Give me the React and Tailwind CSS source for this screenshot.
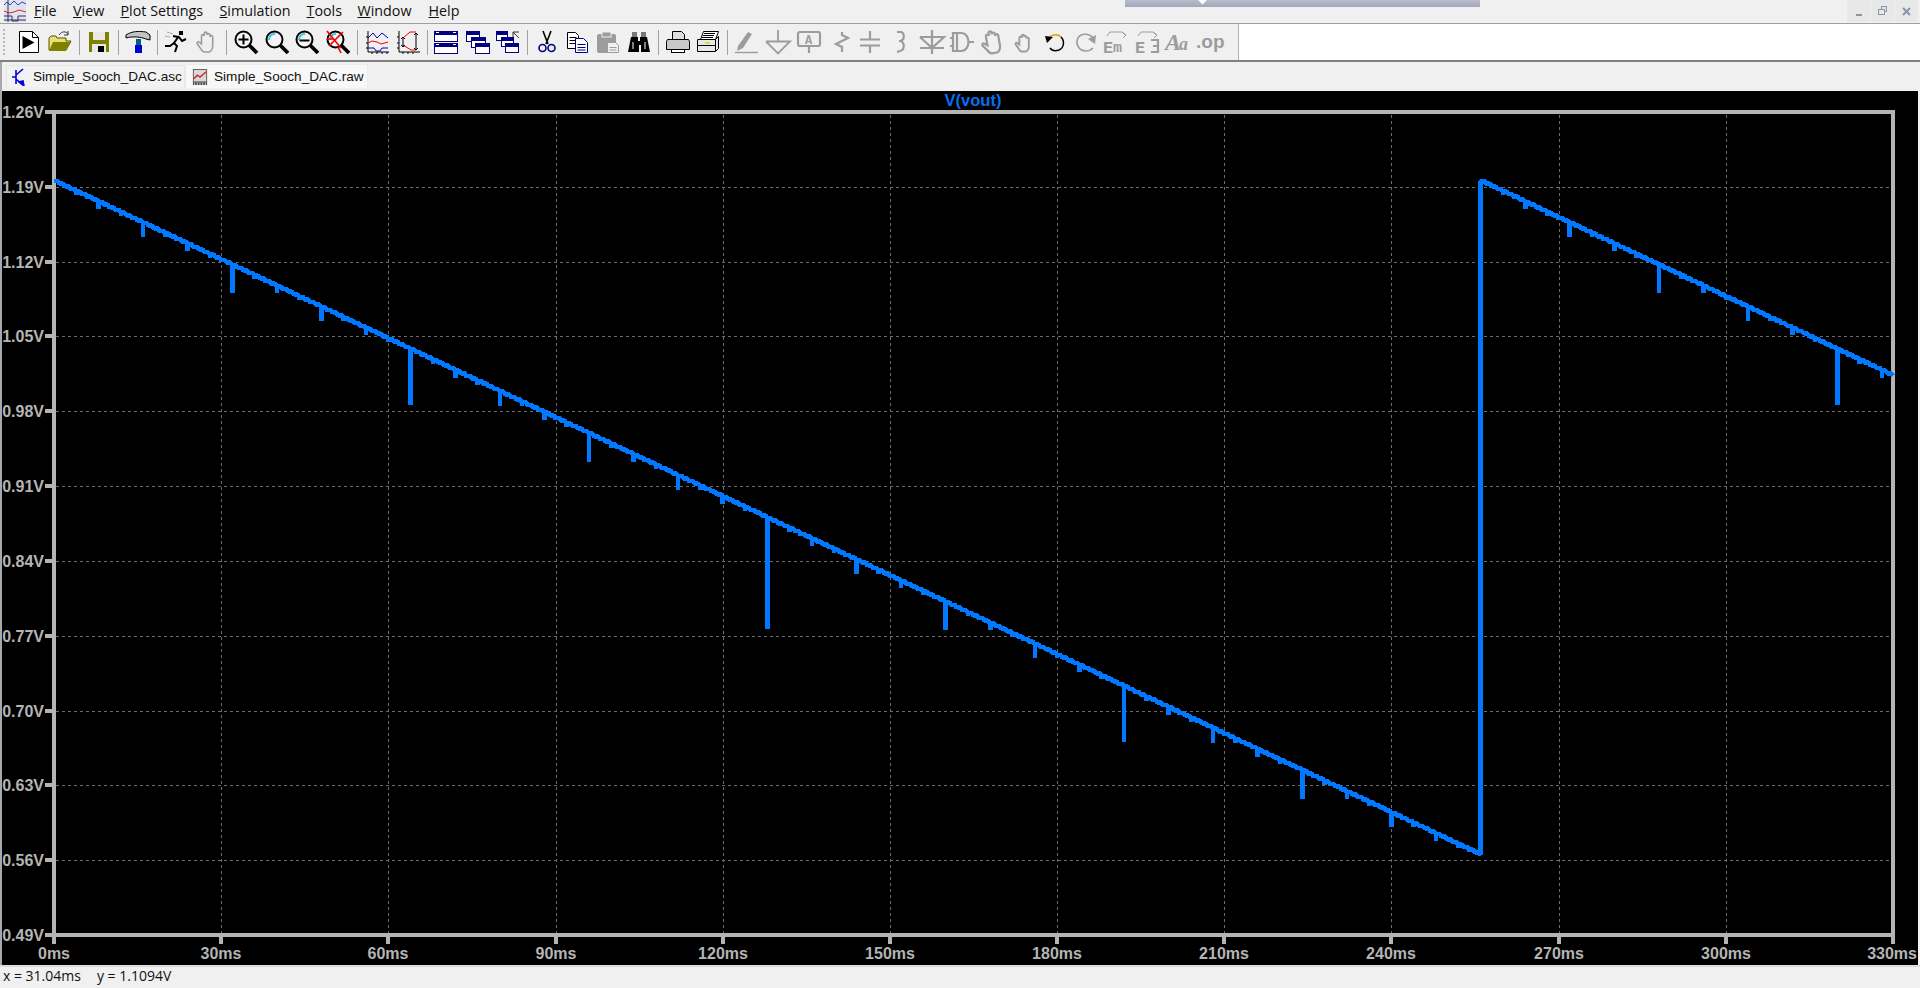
const GRAY = "#9c9c9c";

const menus = [
  ["F", "ile", "w-[39px]"],
  ["V", "iew", "w-[47.5px]"],
  ["P", "lot Settings", "w-[99px]"],
  ["S", "imulation", "w-[87px]"],
  ["T", "ools", "w-[51px]"],
  ["W", "indow", "w-[71px]"],
  ["H", "elp", "w-[40px]"],
];

const Mag = ({ children }) => (
  <>
    <path d="M15 15l8 8" stroke="#000" strokeWidth="3.8" />
    <circle cx="9.5" cy="9.5" r="8" fill="#f4f4f4" stroke="#000" strokeWidth="2" />
    {children}
  </>
);

const Glint = () => <path d="M4 10a5.5 5.5 0 016-6" fill="none" stroke="#35c8e0" strokeWidth="2" />;

const Win = ({ x, y, w, h }) => (
  <>
    <rect x={x + 0.5} y={y + 0.5} width={w} height={h} fill="#fff" stroke="#000080" />
    <rect x={x} y={y} width={w + 1} height="4" fill="#000080" />
  </>
);

const HandPath = ({ s = 1.6 }) => (
  <path
    d="M6.5 14V6a1.4 1.4 0 012.8 0V3.5a1.4 1.4 0 012.8 0V5a1.4 1.4 0 012.8 0v2a1.4 1.4 0 012.8 0v9c0 3-2 6-4 6h-4.4c-2 0-3-2-4-4l-3-4c-1-2 1-3 2.2-1.5z"
    fill="#f0f0f0"
    stroke={GRAY}
    strokeWidth={s}
  />
);

const Sym = ({ d }) => <path d={d} fill="none" stroke={GRAY} strokeWidth="2.2" />;

const IconText = ({ x, y, size, children, italic, family = "Liberation Sans" }) => (
  <text x={x} y={y} fontSize={size} fontWeight="700" fontStyle={italic ? "italic" : "normal"} fontFamily={family} fill={GRAY}>
    {children}
  </text>
);

const icons = {
  run: (
    <>
      <path d="M2.5 1.5h13l6 6v15h-19z" fill="#fff" stroke="#000" />
      <path d="M15.5 1.5v6h6" fill="none" stroke="#000" />
      <path d="M5.5 6l12 6.5-12 6.5z" fill="#000" />
    </>
  ),
  open: (
    <>
      <path d="M1 8V20h17l5-9H18V8h-9L8 6H3z" fill="#e8e070" stroke="#555500" />
      <path d="M1 21l4-9h18l-5 9z" fill="#808000" />
      <path d="M11 5c3-4 7-4 9-1" fill="none" stroke="#333" />
      <path d="M20 1v4h-4" fill="none" stroke="#333" />
    </>
  ),
  save: (
    <>
      <rect x="2" y="2" width="20" height="20" fill="#808000" />
      <rect x="6" y="2" width="12" height="8" fill="#e8e8e8" />
      <rect x="5" y="14" width="14" height="8" fill="#e8e8e8" />
      <rect x="11" y="16" width="6" height="6" fill="#000" />
    </>
  ),
  hammer: (
    <>
      <path d="M0 5C6 1 13 1 20 2l4 3v5l-4-1c-5-2-13-3-20-1z" fill="#c4c4c4" stroke="#000" />
      <rect x="10" y="9" width="5" height="6" fill="#006080" />
      <rect x="9" y="15" width="7" height="8" fill="#0000d0" />
    </>
  ),
  runner: (
    <>
      <path d="M3 2l6 2M1 6l5 1" stroke="#aaa" fill="none" />
      <path d="M15 6l-5 7 3 3-2 6M10 13l-4 3-5 0M14 7l-5-1M15 7l3 4 4-2" fill="none" stroke="#000" strokeWidth="2" />
      <rect x="15" y="1" width="4" height="4" fill="#000" />
    </>
  ),
  hand: <HandPath />,
  zoomIn: (
    <Mag>
      <path d="M4.5 9.5h10M9.5 4.5v10" stroke="#000" strokeWidth="2" />
    </Mag>
  ),
  zoomFit: (
    <Mag>
      <Glint />
    </Mag>
  ),
  zoomOut: (
    <Mag>
      <Glint />
      <path d="M4.5 10.5h10" stroke="#000" strokeWidth="2" />
    </Mag>
  ),
  zoomCancel: (
    <>
      <Mag>
        <Glint />
      </Mag>
      <path d="M1 1l14 17M17 2L3 16M1 9h6M12 17l3 6" stroke="#f00000" strokeWidth="1.6" fill="none" />
    </>
  ),
  graph1: (
    <>
      <path d="M3 1v21h21M1 7h2M1 13h2M1 18h2M7 22v2M12 22v2M17 22v2M22 22v2" stroke="#000" fill="none" />
      <path d="M3 8l5-5 4 5 5-5 6 5" stroke="#0000b0" fill="none" />
      <path d="M3 13l4-2 5 1 4 2 7-2" stroke="#f00000" fill="none" />
      <path d="M3 18h6l2 3h4l2-3h6" stroke="#0000b0" fill="none" />
    </>
  ),
  graph2: (
    <>
      <path d="M3 1v21h21M1 7h2M1 13h2M1 18h2M7 22v2M12 22v2M17 22v2" stroke="#000" fill="none" />
      <path d="M7 8l7-6h6M7 15l8 5h5" stroke="#f00000" fill="none" />
      <path d="M7 7v10M5 9l2-2 2 2M5 15l2 2 2-2M20 3v17M18 5l2-2 2 2M18 18l2 2 2-2" stroke="#000" fill="none" />
    </>
  ),
  tile: (
    <>
      <Win x={0} y={1} w={23} h={10} />
      <Win x={0} y={13} w={23} h={10} />
      <path d="M2 2.5h3M19 2.5h3M2 14.5h3M19 14.5h3" stroke="#fff" />
    </>
  ),
  cascade: (
    <>
      <Win x={1} y={1} w={13} h={10} />
      <Win x={6} y={7} w={14} h={10} />
      <Win x={10} y={13} w={14} h={10} />
    </>
  ),
  cascadeUp: (
    <>
      <Win x={0} y={1} w={11} h={9} />
      <Win x={5} y={7} w={12} h={9} />
      <Win x={9} y={13} w={13} h={9} />
      <path d="M17 2h6M17 2v5M17 2l6 6" stroke="#333" fill="none" />
    </>
  ),
  cut: (
    <>
      <path d="M8 1l5 13M16 1l-5 13" stroke="#000" strokeWidth="1.6" fill="none" />
      <circle cx="7.5" cy="18" r="3.5" fill="none" stroke="#000080" strokeWidth="1.6" />
      <circle cx="16.5" cy="18" r="3.5" fill="none" stroke="#000080" strokeWidth="1.6" />
    </>
  ),
  copy: (
    <>
      <path d="M2.5 2.5h8l3 3v13h-11z" fill="#fff" stroke="#000" />
      <path d="M4.5 7.5h7M4.5 10.5h7M4.5 13.5h7" stroke="#000" />
      <path d="M10.5 8.5h8l4 4v10h-12z" fill="#fff" stroke="#000080" />
      <path d="M12.5 14.5h8M12.5 17.5h8M12.5 20h8" stroke="#000080" />
    </>
  ),
  paste: (
    <>
      <rect x="1" y="4" width="19" height="19" rx="2" fill={GRAY} />
      <rect x="6" y="2" width="9" height="5" fill={GRAY} stroke="#efefef" />
      <path d="M11.5 12.5h8l3 3v7h-11z" fill="#f0f0f0" stroke={GRAY} />
      <path d="M13.5 17.5h7M13.5 20h7" stroke={GRAY} />
    </>
  ),
  find: (
    <>
      <rect x="5" y="2" width="5" height="5" fill="#777" />
      <rect x="14" y="2" width="5" height="5" fill="#777" />
      <path d="M4 7h7v4h2V7h7l3 15h-9v-7h-2v7H1z" fill="#000" />
      <path d="M6 12v7M18 12v7" stroke="#fff" />
    </>
  ),
  print: (
    <>
      <path d="M6.5 1.5h9l3 3v6h-12z" fill="#ddd" stroke="#000" />
      <path d="M1.5 9.5h21l1 2v8h-23v-8z" fill="#c8c8c8" stroke="#000" />
      <rect x="5.5" y="19.5" width="13" height="3" fill="#fff" stroke="#000" />
    </>
  ),
  printer: (
    <>
      <path d="M7.5 1.5h15l-3 8h-15z" fill="#fff" stroke="#000" />
      <path d="M8 3.5h11M7 5.5h11M6 7.5h11" stroke="#000" />
      <path d="M1.5 9.5h18v12h-18zM19.5 9.5l3-3v12l-3 3" fill="#e8e8e8" stroke="#000" />
      <path d="M1.5 15.5h18" stroke="#000" />
      <rect x="9" y="12" width="5" height="1.6" fill="#e0d020" />
    </>
  ),
  wire: (
    <>
      <path d="M3 16L13 2l4 2-9 14-6 3z" fill={GRAY} />
      <path d="M0 22.5h23" stroke={GRAY} strokeWidth="1.4" />
    </>
  ),
  gnd: <path d="M12 0v11M0 11.5h24L12 23.5 0 11.5" fill="none" stroke={GRAY} strokeWidth="1.8" />,
  label: (
    <>
      <rect x="1" y="2" width="22" height="14" rx="2" fill="none" stroke={GRAY} strokeWidth="2.2" />
      <path d="M12 16v7" stroke={GRAY} strokeWidth="2.2" />
      <IconText x={8} y={13.5} size={12} family="Liberation Mono">A</IconText>
    </>
  ),
  res: <Sym d="M15 2v3l6 3-12 6 6 3v5" />,
  cap: <Sym d="M12 1v8M2 9.5h20M2 15.5h20M12 16v7" />,
  ind: <Sym d="M8 2h3c5 0 5 8 0 9h-1 1c5 1 5 9 0 10l-3 1" />,
  diode: <Sym d="M12 0v24M0 7h24L12 18 0 7M0 18h24" />,
  gate: <Sym d="M0 8h4M0 16h4M3 3h8c10 0 10 18 0 18H3zM18 12h6M7 3v18" />,
  hand3: (
    <g transform="translate(12 12) rotate(-10) scale(1.1) translate(-12 -12)">
      <HandPath s={2} />
    </g>
  ),
  handSmall: (
    <g transform="translate(12 13) scale(.85) translate(-12 -12)">
      <HandPath s={2.2} />
    </g>
  ),
  undo: (
    <>
      <path d="M6 8c3-4 9-4 12-1" fill="none" stroke="#c0a800" strokeWidth="1.5" />
      <path d="M18 7c4 4 3 11-2 13-3 1-7 1-9-2" fill="none" stroke="#000" strokeWidth="1.5" />
      <path d="M2 6l8 1-6 6z" fill="#000" />
    </>
  ),
  redo: (
    <>
      <path d="M20 8c-4-5-12-5-15 0-3 6 1 13 8 13 3 0 5-1 7-3" fill="none" stroke={GRAY} strokeWidth="1.6" />
      <path d="M23 5l-1 9-7-5z" fill={GRAY} />
    </>
  ),
  em: (
    <>
      <path d="M3 6l3-4h12l4 3M22 5l-3-2M22 5l-3 3" fill="none" stroke={GRAY} />
      <IconText x={-1} y={23} size={17} family="Liberation Mono">E</IconText>
      <IconText x={9} y={22} size={15} family="Liberation Mono">m</IconText>
    </>
  ),
  e3: (
    <>
      <path d="M3 6l3-4h12l4 3M22 5l-3-2M22 5l-3 3" fill="none" stroke={GRAY} />
      <IconText x={0} y={23} size={17} family="Liberation Mono">E</IconText>
      <path d="M16 10h7v12h-7M18 16h5" fill="none" stroke={GRAY} strokeWidth="2.2" />
    </>
  ),
  aa: (
    <>
      <IconText x={-1} y={20} size={24} italic family="Liberation Serif">A</IconText>
      <IconText x={13} y={20} size={18} italic family="Liberation Serif">a</IconText>
    </>
  ),
  op: <IconText x={0} y={18} size={19} family="Liberation Sans">.op</IconText>,
};

const toolbar = [
  ["run", "open"],
  ["save"],
  ["hammer"],
  ["runner", "hand"],
  ["zoomIn", "zoomFit", "zoomOut", "zoomCancel"],
  ["graph1", "graph2"],
  ["tile", "cascade", "cascadeUp"],
  ["cut", "copy", "paste", "find"],
  ["print", "printer"],
  ["wire", "gnd", "label", "res", "cap", "ind", "diode", "gate", "hand3", "handSmall", "undo", "redo", "em", "e3", "aa", "op"],
];

// plot geometry, in page pixels
const LEFT = 54;
const RIGHT = 1893;
const TOP = 112;
const BOTTOM = 935;
const MS = (RIGHT - LEFT) / 330;
const yLabels = ["1.26V", "1.19V", "1.12V", "1.05V", "0.98V", "0.91V", "0.84V", "0.77V", "0.70V", "0.63V", "0.56V", "0.49V"];
const xLabels = ["0ms", "30ms", "60ms", "90ms", "120ms", "150ms", "180ms", "210ms", "240ms", "270ms", "300ms", "330ms"];
const yTick = (i) => Math.round(TOP + (i * (BOTTOM - TOP)) / 11);
const xTick = (i) => Math.round(LEFT + (i * (RIGHT - LEFT)) / 11);

const tracePath = () => {
  const level = (t) => 181 + (t % 256) * 2.633;
  let d = `M${LEFT} ${level(0)}`;
  for (let t = 0; t < 330; t++) {
    const x = LEFT + t * MS;
    const next = x + MS;
    const y = level(t);
    if (t > 0 && t % 256 !== 0) {
      const glitch = (t & -t) * 0.87;
      if (glitch > 1.5) d += `L${x} ${y + glitch}L${x} ${y}`;
    }
    d += `L${next - 2} ${y}`;
    const t2 = t + 1;
    if (t2 === 256) {
      d += `L${next} ${y + 2.6}L${next} 181`;
    } else {
      d += `L${next} ${level(t2)}`;
    }
  }
  return d;
};

const Plot = () => (
  <svg className="block w-[1916px] h-[874px]" viewBox="2 91 1916 874">
    <rect x="2" y="91" width="1916" height="874" fill="#000" />
    <g stroke="#6c6c6c" strokeDasharray="3 3" shapeRendering="crispEdges">
      {yLabels.slice(1, 11).map((_, i) => (
        <path key={i} d={`M56 ${yTick(i + 1) + 0.5}H1891`} />
      ))}
      {xLabels.slice(1, 11).map((_, i) => (
        <path key={i} d={`M${xTick(i + 1) + 0.5} 115V933`} />
      ))}
    </g>
    <g fill="none" stroke="#b4b4b4" strokeWidth="4" shapeRendering="crispEdges">
      <rect x={LEFT} y={TOP} width={RIGHT - LEFT} height={BOTTOM - TOP} />
      {yLabels.map((_, i) => (
        <path key={i} d={`M45 ${yTick(i)}H54`} />
      ))}
      {xLabels.map((_, i) => (
        <path key={i} d={`M${xTick(i)} 935V944`} />
      ))}
    </g>
    <path d={tracePath()} fill="none" stroke="#0078ff" strokeWidth="4.6" strokeLinejoin="bevel" shapeRendering="crispEdges" />
    <g fill="#b4b4b4" fontFamily="'Liberation Sans', sans-serif" fontWeight="700" fontSize="16">
      {yLabels.map((label, i) => (
        <text key={label} x="44" y={yTick(i) + 6} textAnchor="end">
          {label}
        </text>
      ))}
      {xLabels.map((label, i) => (
        <text key={label} x={i === 11 ? 1917 : xTick(i)} y="959" textAnchor={i === 11 ? "end" : "middle"}>
          {label}
        </text>
      ))}
    </g>
    <text x="973" y="106" textAnchor="middle" fill="#0a6eea" fontFamily="'Liberation Sans', sans-serif" fontWeight="700" fontSize="16.5">
      V(vout)
    </text>
  </svg>
);

export default function App() {
  return (
    <div className="relative flex flex-col w-[1920px] h-[988px] overflow-hidden bg-[#f0f0f0] text-[#111] font-['Liberation_Sans',sans-serif]">
      {/* strip of another window peeking in at the top */}
      <div className="absolute left-[1125px] top-0 w-[355px] h-[7px] bg-gradient-to-b from-[#b9bccb] to-[#a3a7ba]">
        <div className="absolute left-[74px] top-[-4px] w-[7px] h-[7px] rotate-45 bg-white" />
      </div>

      <div className="flex items-center h-[24px] border-b border-[#a0a0a0] shrink-0">
        <svg className="ml-[4px] mr-[8px] mt-[-2px]" width="22" height="22" viewBox="0 0 22 22">
          <rect width="22" height="22" fill="#dfe3ee" />
          <path d="M0 5l3-3 3 3 4-4 4 4 4-3 4 2" stroke="#3040c0" fill="none" />
          <path d="M0 11l5 2 5-1 5-2 7 2" stroke="#e02020" fill="none" />
          <path d="M0 16h8v5h6v-5h8M0 20h22M4 0v22" stroke="#303060" fill="none" />
        </svg>
        <div className="flex font-['Open_Sans',sans-serif] text-[14.3px] leading-none">
          {menus.map(([key, rest, width]) => (
            <span key={key} className={`${width} whitespace-nowrap`}>
              <u>{key}</u>
              {rest}
            </span>
          ))}
        </div>
        <div className="flex ml-auto mr-[2px] gap-[1px] self-start">
          <div className="flex items-end justify-center w-[23px] h-[22px] pb-[6px] rounded-b-[2px] bg-[#e8e8e8]">
            <div className="w-[6px] h-[2px] bg-[#8a96a6]" />
          </div>
          <div className="flex items-center justify-center w-[23px] h-[22px] rounded-b-[2px] bg-[#e8e8e8]">
            <svg width="10" height="10" viewBox="0 0 10 10" fill="none" stroke="#8a96a6" shapeRendering="crispEdges">
              <rect x="3.5" y="0.5" width="5" height="5" />
              <rect x="0.5" y="3.5" width="6" height="5" fill="#e8e8e8" />
            </svg>
          </div>
          <div className="flex items-center justify-center w-[23px] h-[22px] rounded-b-[2px] bg-[#e8e8e8]">
            <svg width="9" height="9" viewBox="0 0 9 9" stroke="#8a96a6" strokeWidth="2">
              <path d="M1 1l7 7M8 1L1 8" />
            </svg>
          </div>
        </div>
      </div>

      <div className="flex h-[38px] border-b-2 border-[#808080] shrink-0">
        <div className="flex items-center w-[1239px] shrink-0 border-r border-[#b0b0b0] pl-[3px]">
          <div className="w-[6px] h-[26px] mr-[2px] border-l-2 border-dotted border-[#b8b8b8]" />
          <div className="w-[3px]" />
          {toolbar.map((group, g) => (
            <div key={g} className="flex items-center">
              {g > 0 && <div className="w-px h-[25px] mx-[3.5px] bg-[#a0a0a0]" />}
              {group.map((name) => (
                <div key={name} className="flex items-center justify-center w-[30.75px] h-[36px]">
                  <svg width="24" height="24" viewBox="0 0 24 24" className="overflow-visible">
                    {icons[name]}
                  </svg>
                </div>
              ))}
            </div>
          ))}
        </div>
        <div className="flex-1 bg-white" />
      </div>

      <div className="flex items-start h-[29px] pl-[4px] pt-[2px] text-[13.6px] leading-none shrink-0 border-l-2 border-[#a8a8a8]">
        <div className="flex items-center gap-[7px] w-[179px] h-[22px] mt-[1px] pl-[5px] border border-[#e6e6e6] border-b-0 bg-[#f2f2f2] whitespace-nowrap">
          <svg width="14" height="18" viewBox="0 0 14 18" fill="none" stroke="#0000e0" strokeWidth="1.6">
            <path d="M0 9h4M4 2v14M4 7l7-6M4 11l7 6" />
            <path d="M7 14l5 4-1-5z" fill="#0000e0" />
          </svg>
          <span>Simple_Sooch_DAC.asc</span>
        </div>
        <div className="flex items-center gap-[6px] w-[183px] h-[24px] pl-[6px] border border-[#ececec] border-b-0 bg-[#f8f8f8] whitespace-nowrap">
          <svg width="16" height="16" viewBox="0 0 16 18">
            <rect width="16" height="18" fill="#555" />
            <rect x="1" y="1" width="14" height="13" fill="#d8d8d8" />
            <path d="M1 11l4-4 3 2 7-6" fill="none" stroke="#e02020" strokeWidth="1.6" />
            <path d="M2 15v3M5 15v3M8 15v3M11 15v3M14 15v3" stroke="#ccc" />
          </svg>
          <span>Simple_Sooch_DAC.raw</span>
        </div>
      </div>

      <div className="h-[874px] border-l-2 border-[#a8a8a8] border-r-2 border-r-[#f4f4f4] shrink-0">
        <Plot />
      </div>

      <div className="flex-1 flex items-center gap-[16px] pl-[3px] pb-[3px] border-t-2 border-[#dcdcdc] font-['Open_Sans',sans-serif] text-[14px] leading-none">
        <span>x = 31.04ms</span>
        <span>y = 1.1094V</span>
      </div>
    </div>
  );
}
